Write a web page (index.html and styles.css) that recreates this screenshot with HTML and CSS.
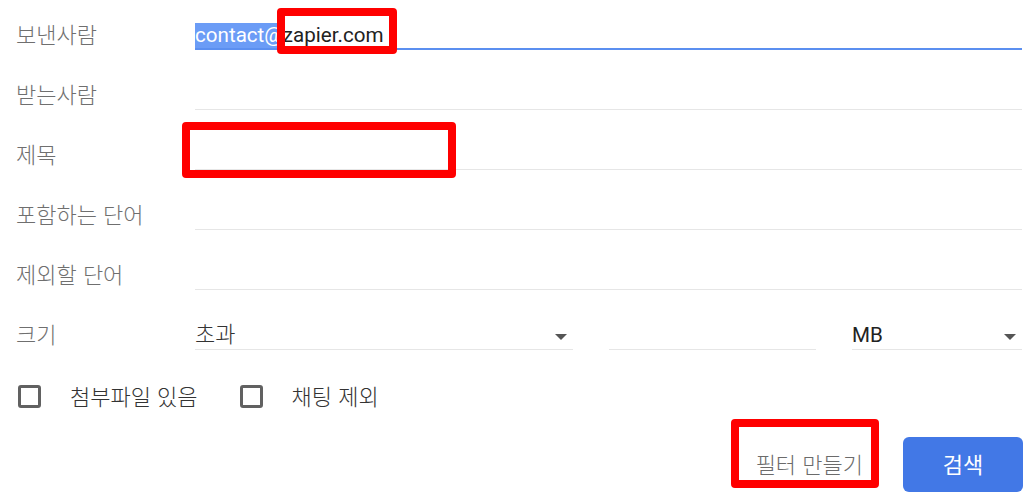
FILE: index.html
```html
<!DOCTYPE html>
<html lang="ko">
<head>
<meta charset="utf-8">
<title>검색</title>
<link rel="stylesheet" href="styles.css">
</head>
<body>
<div class="page">
  <form class="form">
    <div class="row first">
      <div class="label">보낸사람</div>
      <div class="field active"><span class="sel">contact@</span>zapier.com</div>
    </div>
    <div class="row">
      <div class="label">받는사람</div>
      <div class="field"></div>
    </div>
    <div class="row">
      <div class="label">제목</div>
      <div class="field"></div>
    </div>
    <div class="row">
      <div class="label">포함하는 단어</div>
      <div class="field"></div>
    </div>
    <div class="row">
      <div class="label">제외할 단어</div>
      <div class="field"></div>
    </div>
    <div class="row">
      <div class="label">크기</div>
      <div class="sizes">
        <div class="field select op"><span class="ko">초과</span><span class="caret"></span></div>
        <div class="field num"></div>
        <div class="field select unit">MB<span class="caret"></span></div>
      </div>
    </div>
    <div class="checks">
      <label class="check"><span class="box"></span><span class="ctext">첨부파일 있음</span></label>
      <label class="check"><span class="box"></span><span class="ctext">채팅 제외</span></label>
    </div>
    <div class="actions">
      <button type="button" class="btn text">필터 만들기</button>
      <button type="button" class="btn primary">검색</button>
    </div>
  </form>
  <div class="mark m1"></div>
  <div class="mark m2"></div>
  <div class="mark m3"></div>
</div>
</body>
</html>
```

FILE: styles.css
```css
html, body {
  margin: 0;
  padding: 0;
  background: #ffffff;
}
body {
  font-family: Roboto, "Noto Sans CJK KR", sans-serif;
  font-size: 20px;
  color: #222222;
}
.page {
  position: relative;
  width: 1032px;
  height: 498px;
  overflow: hidden;
}
.form {
  display: flex;
  flex-direction: column;
  padding-right: 10px;
}
.row {
  display: flex;
  align-items: flex-end;
  height: 60px;
}
.row.first {
  height: 50px;
}
.label {
  flex: 0 0 195px;
  box-sizing: border-box;
  padding-left: 16px;
  line-height: 28px;
  margin-bottom: 3px;
  color: #6f6f6f;
  font-family: "Noto Sans CJK KR", sans-serif;
  font-size: 22px;
  font-weight: 300;
}
.field {
  flex: 1;
  box-sizing: border-box;
  height: 30px;
  line-height: 28px;
  border-bottom: 1px solid #e6e6e6;
  font-size: 20.6px;
  color: #222;
  white-space: nowrap;
}
.field.active {
  border-bottom: 2px solid #5b8ff0;
  line-height: 26px;
  padding-top: 2px;
}
.sel {
  background: #6b9cf6;
  color: #ffffff;
  display: inline-block;
  line-height: 25px;
}
.ko {
  font-family: "Noto Sans CJK KR", sans-serif;
  font-size: 22px;
  font-weight: 300;
  color: #333;
  position: relative;
  top: -2px;
}
.sizes {
  flex: 1;
  display: flex;
  align-items: flex-end;
  gap: 36px;
}
.select {
  position: relative;
  flex: 0 0 auto;
}
.op { width: 378px; }
.num { width: 207px; flex: 0 0 auto; }
.unit { flex: 1; padding-top: 1px; }
.caret {
  position: absolute;
  right: 6px;
  top: 14px;
  width: 0;
  height: 0;
  border-left: 6px solid transparent;
  border-right: 6px solid transparent;
  border-top: 6px solid #555555;
}
.checks {
  display: flex;
  align-items: center;
  padding: 34px 0 0 18px;
  height: 24px;
}
.check {
  display: flex;
  align-items: center;
  margin-right: 42px;
}
.box {
  width: 23px;
  height: 23px;
  box-sizing: border-box;
  border: 3px solid #616161;
  border-radius: 3px;
  margin-right: 29px;
}
.ctext {
  color: #333333;
  line-height: 24px;
  font-family: "Noto Sans CJK KR", sans-serif;
  font-size: 22px;
  font-weight: 300;
  padding-bottom: 3px;
}
.actions {
  display: flex;
  justify-content: flex-end;
  align-items: center;
  gap: 16px;
  margin-top: 29px;
}
.btn {
  font-family: "Noto Sans CJK KR", sans-serif;
  font-size: 22px;
  border: 0;
  height: 55px;
  border-radius: 6px;
  cursor: pointer;
  font-weight: 300;
  padding-bottom: 4px;
}
.btn.text {
  background: transparent;
  color: #6b6b6b;
  padding-left: 24px;
  padding-right: 24px;
}
.btn.primary {
  background: #4278e6;
  color: #ffffff;
  width: 120px;
  margin-right: -1px;
  font-weight: 400;
}
.mark {
  position: absolute;
  box-sizing: border-box;
  border: 8px solid #ff0000;
  border-radius: 4px;
}
.m1 { left: 277px; top: 8px; width: 120px; height: 46px; }
.m2 { left: 182px; top: 122px; width: 274px; height: 56px; }
.m3 { left: 731px; top: 419px; width: 148px; height: 69px; }
```
